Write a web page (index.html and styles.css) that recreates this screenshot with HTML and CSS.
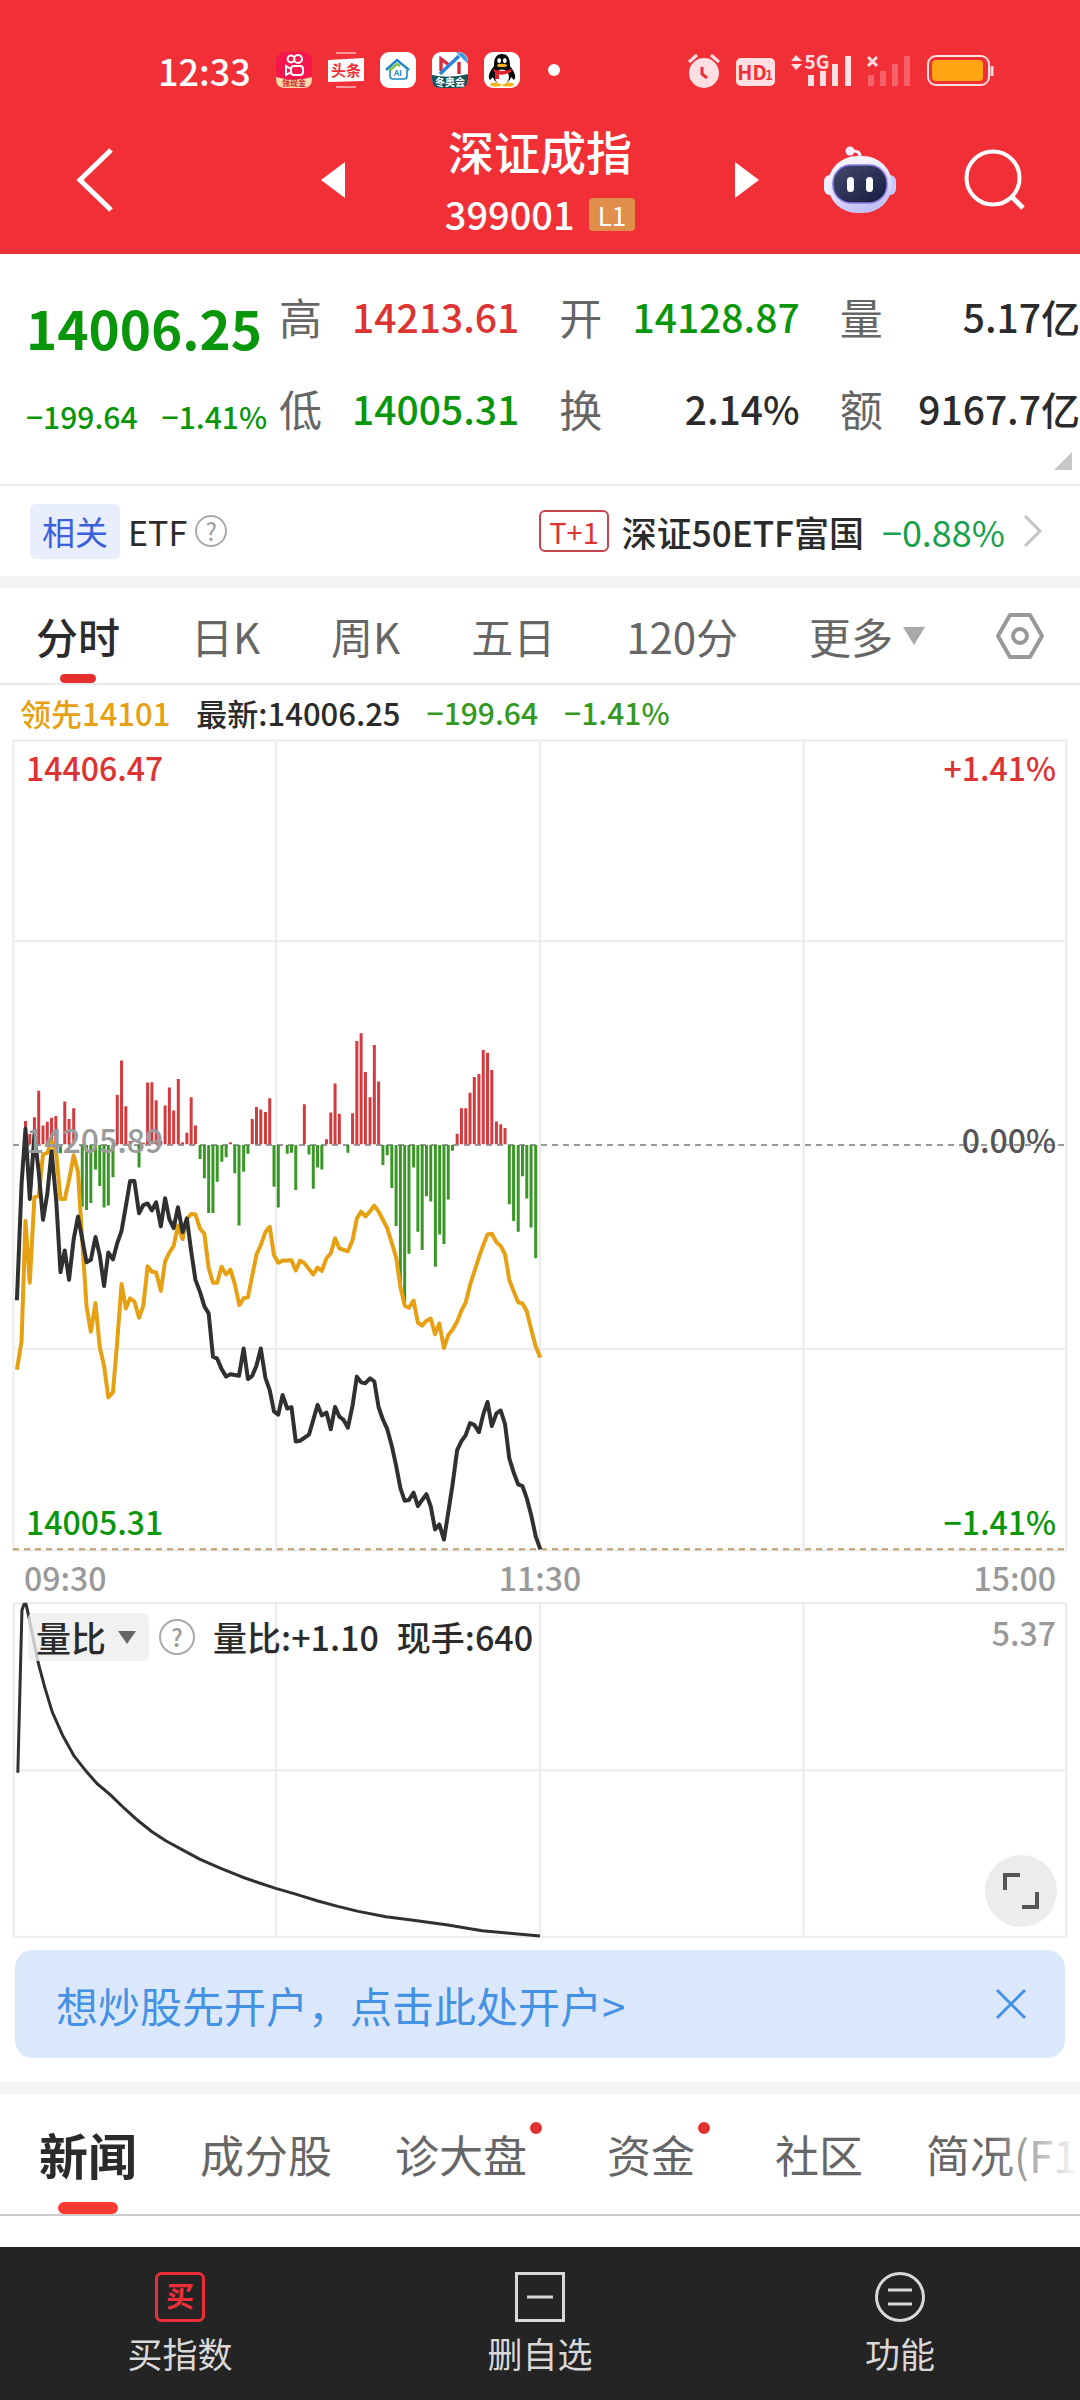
FILE: index.html
```html
<!DOCTYPE html>
<html lang="zh-CN">
<head>
    <meta charset="UTF-8">
    <meta name="viewport" content="width=device-width, initial-scale=1.0">
    <title>深证成指 399001</title>
    <link rel="stylesheet" href="styles.css">
</head>
<body>
    <header class="top">
        <div class="status-bar">
            <span class="clock">12:33</span>
            <div class="app-icons">
                <svg viewBox="0 0 36 36" width="36" height="36">
                    <rect width="36" height="36" rx="9" fill="#f5164b"/>
                    <path d="M0 25Q18 30 36 25V27Q36 36 27 36H9Q0 36 0 27Z" fill="#fbd9a8"/>
                    <g fill="none" stroke="#fff" stroke-width="2">
                        <circle cx="15" cy="7" r="3.4"/><circle cx="22" cy="7" r="4"/>
                        <rect x="15" y="14" width="12" height="9" rx="3"/><path d="M15 17l-5-3v9l5-3"/>
                    </g>
                    <text x="18" y="34" class="app-text" font-size="8" fill="#c81e2c">领现金</text>
                </svg>
                <svg viewBox="0 0 36 36" width="36" height="36">
                    <path d="M8 1h20M8 35h20" stroke="#fff" stroke-width="1"/>
                    <path d="M0 8L36 6V29L0 30Z" fill="#fff"/>
                    <text x="18" y="24" class="app-text" font-size="15" fill="#f12f37">头条</text>
                </svg>
                <svg viewBox="0 0 36 36" width="36" height="36">
                    <rect width="36" height="36" rx="9" fill="#fff"/>
                    <path d="M6 18L17 8L29 18" fill="none" stroke="#1d86c8" stroke-width="2.4"/>
                    <path d="M9 19L17 12L20 14" fill="none" stroke="#7cc242" stroke-width="2.4"/>
                    <path d="M10 19V24Q10 27 13 27H24Q27 27 27 24V18" fill="none" stroke="#1d86c8" stroke-width="1.6"/>
                    <text x="18" y="24" class="app-text" font-size="8" fill="#1d86c8">AI</text>
                </svg>
                <svg viewBox="0 0 36 36" width="36" height="36">
                    <rect width="36" height="36" rx="9" fill="#fff"/>
                    <path d="M24 0Q36 0 36 12Z" fill="#3d9be6"/>
                    <path d="M9 19V7L17 13M27 10V22" fill="none" stroke="#d92b3a" stroke-width="3.4"/>
                    <path d="M8 22L27 4" stroke="#2b86d9" stroke-width="3.6"/>
                    <path d="M0 23Q18 27 36 22V27Q36 36 27 36H9Q0 36 0 27Z" fill="#14545c"/>
                    <text x="18" y="34" class="app-text" font-size="10" fill="#fff">冬奥会</text>
                </svg>
                <svg viewBox="0 0 36 36" width="36" height="36">
                    <rect width="36" height="36" rx="9" fill="#fff"/>
                    <ellipse cx="12" cy="32.5" rx="6" ry="2" fill="#f7b21a"/><ellipse cx="24" cy="32.5" rx="6" ry="2" fill="#f7b21a"/>
                    <path d="M18 2C11 2 10 8 10 14C6 19 3 25 6 28L9 25C11 34 25 34 27 25L30 28C33 25 30 19 26 14C26 8 25 2 18 2Z" fill="#0b0b0b"/>
                    <ellipse cx="18" cy="25" rx="7" ry="7.4" fill="#fff"/>
                    <ellipse cx="15.2" cy="8.6" rx="1.9" ry="2.6" fill="#fff"/><ellipse cx="20.8" cy="8.6" rx="1.9" ry="2.6" fill="#fff"/>
                    <ellipse cx="18" cy="13.4" rx="5" ry="1.7" fill="#f7b21a"/>
                    <path d="M9 17Q18 21 27 17V20Q18 24 15 22V27H11V21Z" fill="#e5202c"/>
                </svg>
            </div>
            <span class="more-dot"></span>
            <div class="signals">
                <svg viewBox="0 0 32 36" width="32" height="36">
                    <circle cx="16" cy="21" r="15" fill="#ffdfe1"/>
                    <path d="M1 10L9 3M31 10L23 3" stroke="#ffdfe1" stroke-width="3"/>
                    <path d="M14 15V22L19 26" fill="none" stroke="#f12f37" stroke-width="3"/>
                </svg>
                <svg viewBox="0 0 39 36" width="39" height="36">
                    <rect y="6" width="39" height="28" rx="5" fill="#ffdfe1"/>
                    <text x="16" y="28" class="app-text" font-size="20" fill="#f12f37">HD</text>
                    <text x="33" y="28" class="app-text" font-size="13" fill="#f12f37">1</text>
                </svg>
                <svg viewBox="0 0 60 36" width="60" height="36">
                    <path d="M0 9L5 3L11 9ZM0 12L5 18L11 12Z" fill="#ffdfe1"/>
                    <text x="26" y="17" class="app-text" font-size="19" fill="#ffdfe1">5G</text>
                    <path d="M20 34V23M32 34V19M44 34V12M57 34V4" stroke="#ffdfe1" stroke-width="6"/>
                </svg>
                <svg viewBox="0 0 44 36" width="44" height="36">
                    <path d="M1 5L10 14M10 5L1 14" stroke="#ffdfe1" stroke-width="3"/>
                    <path d="M4 34V23M16 34V19M28 34V12M40 34V4" stroke="#f7616a" stroke-width="6"/>
                </svg>
                <svg viewBox="0 0 67 36" width="67" height="36">
                    <rect x="1" y="4" width="61" height="29" rx="8" fill="none" stroke="#ffdfe1" stroke-width="2"/>
                    <rect x="5" y="8" width="51" height="21" rx="4" fill="#ffa514"/>
                    <path d="M65 14V24" stroke="#ffdfe1" stroke-width="3"/>
                </svg>
            </div>
        </div>
        <nav class="title-bar">
            <button class="back" aria-label="返回">
                <svg viewBox="0 0 38 66" width="38" height="66"><path d="M35 3L4 33L35 63" fill="none" stroke="#fff" stroke-width="5"/></svg>
            </button>
            <div class="switcher">
                <button aria-label="上一个">
                    <svg viewBox="0 0 24 36" width="24" height="36"><path d="M24 0V36L0 18Z" fill="#fff"/></svg>
                </button>
                <div class="title">
                    <h1>深证成指</h1>
                    <p>399001 <span class="level">L1</span></p>
                </div>
                <button aria-label="下一个">
                    <svg viewBox="0 0 24 36" width="24" height="36"><path d="M0 0V36L24 18Z" fill="#fff"/></svg>
                </button>
            </div>
            <div class="tools">
                <button aria-label="智能助手">
                    <svg viewBox="0 0 72 68" width="72" height="68">
                        <defs>
                            <linearGradient id="shell" x1="0" y1="0" x2="0.4" y2="1">
                                <stop offset="0" stop-color="#ffffff"/><stop offset="0.6" stop-color="#e4e2ff"/><stop offset="1" stop-color="#c3c0f5"/>
                            </linearGradient>
                            <linearGradient id="visor" x1="0" y1="0" x2="1" y2="1">
                                <stop offset="0" stop-color="#43496b"/><stop offset="1" stop-color="#161c40"/>
                            </linearGradient>
                        </defs>
                        <path d="M27 5Q37 4 36 12" fill="none" stroke="#f1efff" stroke-width="3"/>
                        <circle cx="26" cy="5" r="4.5" fill="#f4eeff"/>
                        <rect x="0" y="29" width="14" height="20" rx="6" fill="#eeecff"/>
                        <rect x="58" y="29" width="14" height="20" rx="6" fill="#c9c8fb"/>
                        <rect x="4" y="10" width="64" height="57" rx="29" fill="url(#shell)"/>
                        <rect x="9" y="19" width="54" height="38" rx="18" fill="url(#visor)" stroke="#8b7be8" stroke-width="1.5"/>
                        <rect x="23" y="31" width="7" height="15" rx="3.5" fill="#fff"/>
                        <rect x="42" y="31" width="7" height="15" rx="3.5" fill="#fff"/>
                    </svg>
                </button>
                <button aria-label="搜索">
                    <svg viewBox="0 0 62 62" width="62" height="62">
                        <circle cx="29" cy="29" r="26.5" fill="none" stroke="#fff" stroke-width="4"/>
                        <path d="M47 47L59 59" stroke="#fff" stroke-width="5"/>
                    </svg>
                </button>
            </div>
        </nav>
    </header>

    <main>
        <section class="quote">
            <div class="price">
                <strong>14006.25</strong>
                <p><span>−199.64</span><span>−1.41%</span></p>
            </div>
            <dl class="figures">
                <div><dt>高</dt><dd class="up">14213.61</dd></div>
                <div><dt>开</dt><dd class="down">14128.87</dd></div>
                <div><dt>量</dt><dd>5.17亿</dd></div>
                <div><dt>低</dt><dd class="down">14005.31</dd></div>
                <div><dt>换</dt><dd>2.14%</dd></div>
                <div><dt>额</dt><dd>9167.7亿</dd></div>
            </dl>
            <svg class="corner" viewBox="0 0 18 18" width="18" height="18"><path d="M18 0V18H0Z" fill="#c8c8c8"/></svg>
        </section>

        <section class="etf">
            <span class="chip">相关</span>
            <span>ETF</span>
            <button class="help" aria-label="ETF 说明">?</button>
            <a class="etf-link" href="#etf">
                <span class="t1">T+1</span>
                <span class="etf-name">深证50ETF富国</span>
                <span class="etf-change">−0.88%</span>
                <svg viewBox="0 0 20 34" width="20" height="34"><path d="M2 2L17 17L2 32" fill="none" stroke="#c4c4c4" stroke-width="3"/></svg>
            </a>
        </section>

        <nav class="period-tabs">
            <button class="active">分时</button>
            <button>日K</button>
            <button>周K</button>
            <button>五日</button>
            <button>120分</button>
            <button class="more">更多<svg viewBox="0 0 22 18" width="22" height="18"><path d="M0 0H22L11 18Z" fill="#a8a8a8"/></svg></button>
            <button aria-label="设置">
                <svg viewBox="0 0 48 46" width="48" height="46">
                    <path d="M14 2H34L46 23L34 44H14L2 23Z" fill="none" stroke="#999" stroke-width="4" stroke-linejoin="round"/>
                    <circle cx="24" cy="23" r="7" fill="none" stroke="#999" stroke-width="4"/>
                </svg>
            </button>
        </nav>

        <section class="chart-area">
            <div class="legend">
                <span class="lead">领先14101</span>
                <span>最新:14006.25</span>
                <span class="fall">−199.64</span>
                <span class="fall">−1.41%</span>
            </div>

            <div class="chart minute">
                <svg viewBox="36 -487 2952 1986" preserveAspectRatio="none">
                    <path class="grid" d="M37 -486H2986V1498H37ZM773 -487V1499M1512 -487V1499M2250 -487V1499M36 6H2988M36 1004H2988"/>
                    <path class="zero" d="M36 505H2988"/>
                    <path class="low" d="M36 1495H2988"/>
                    <!-- one bar per minute, measured from the zero line -->
                    <path class="bar-up" d="M71 503V446M83 503V478M96 503V437M108 503V372M120 503V457M132 503V448M144 503V438M156 503V434M181 503V398M193 503V441M206 503V415M328 503V382M340 503V298M352 503V410M364 503V495M401 503V499M413 503V352M425 503V351M437 503V395M450 503V495M462 503V408M474 503V364M486 503V420M499 503V343M511 503V498M523 503V475M535 503V388M547 503V457M645 503V498M706 503V441M718 503V412M730 503V418M743 503V424M755 503V390M852 503V405M914 503V491M926 503V425M938 503V354M950 503V428M987 503V427M999 503V250M1011 503V231M1023 503V326M1036 503V388M1048 503V260M1060 503V349M1280 503V477M1292 503V415M1304 503V415M1316 503V377M1328 503V338M1341 503V331M1353 503V272M1365 503V279M1377 503V321M1390 503V447M1402 503V454M1414 503V463"/>
                    <path class="bar-down" d="M169 505V525M230 505V656M242 505V664M254 505V647M267 505V565M279 505V605M291 505V658M303 505V653M316 505V584M389 505V560M560 505V539M572 505V586M584 505V671M596 505V671M608 505V595M621 505V546M633 505V535M657 505V574M669 505V702M682 505V570M694 505V526M767 505V607M779 505V658M804 505V526M816 505V524M828 505V615M865 505V528M877 505V612M889 505V560M901 505V565M974 505V524M1072 505V554M1084 505V530M1097 505V610M1109 505V703M1121 505V853M1133 505V890M1145 505V771M1158 505V560M1170 505V717M1182 505V762M1194 505V630M1206 505V643M1219 505V803M1231 505V724M1243 505V747M1255 505V638M1267 505V519M1426 505V650M1438 505V691M1451 505V717M1463 505V581M1475 505V636M1487 505V707M1500 505V782"/>
                    <polyline class="lead-line" points="47,1055 60,985 71,690 83,842 96,632 108,630 120,528 132,524 144,495 157,525 169,637 181,637 193,590 206,530 218,570 230,740 242,900 254,962 267,892 279,1000 291,1045 303,1123 316,1110 328,985 340,845 352,905 364,880 376,888 389,928 401,898 413,802 425,815 437,817 450,862 462,790 474,768 486,752 498,702 511,735 523,685 535,674 547,675 560,710 572,722 584,806 596,842 608,842 620,803 633,822 645,810 657,845 670,897 682,880 694,878 706,825 718,773 730,750 743,718 755,705 767,775 779,793 791,788 816,787 828,812 840,788 852,794 877,822 889,805 901,813 914,782 926,770 938,733 950,758 974,765 987,738 999,685 1011,668 1023,680 1036,667 1048,653 1060,668 1084,708 1097,745 1109,780 1121,852 1133,898 1145,903 1158,886 1170,940 1182,947 1194,935 1206,930 1218,968 1230,942 1243,1002 1255,970 1267,957 1280,937 1292,910 1304,890 1316,848 1328,815 1341,780 1353,750 1365,724 1377,722 1390,743 1402,752 1414,772 1426,835 1438,863 1451,890 1463,893 1475,912 1487,955 1500,998 1513,1025"/>
                    <polyline class="price-line" points="47,885 60,600 71,465 83,637 96,480 108,570 120,688 132,625 144,520 157,640 169,816 181,763 193,835 206,735 218,680 230,735 242,792 254,786 267,730 279,775 291,850 303,768 316,785 328,745 340,715 352,655 364,593 376,593 389,672 401,652 413,648 425,665 437,645 450,704 462,635 474,687 486,708 498,657 511,718 523,685 535,765 547,835 560,865 572,900 584,917 596,1023 608,1028 620,1053 633,1072 645,1066 669,1070 682,1003 694,1078 706,1070 718,1045 730,1003 743,1075 755,1105 767,1157 779,1165 791,1117 804,1150 816,1147 828,1231 840,1229 865,1214 877,1178 889,1141 901,1167 914,1160 926,1201 938,1146 950,1170 962,1178 974,1197 987,1143 999,1072 1011,1086 1023,1088 1036,1076 1048,1084 1060,1147 1072,1177 1084,1200 1097,1242 1109,1290 1121,1345 1133,1376 1145,1374 1158,1356 1170,1389 1182,1374 1194,1360 1206,1390 1218,1446 1230,1434 1243,1471 1255,1405 1267,1337 1280,1252 1292,1230 1304,1215 1316,1186 1328,1190 1341,1208 1353,1165 1365,1134 1377,1193 1390,1162 1402,1155 1414,1188 1426,1272 1438,1306 1451,1336 1463,1340 1475,1370 1487,1410 1500,1463 1513,1495"/>
                </svg>
                <div class="scale">
                    <p class="up"><span>14406.47</span><span>+1.41%</span></p>
                    <p class="mid"><span>14205.89</span><span>0.00%</span></p>
                    <p class="down"><span>14005.31</span><span>−1.41%</span></p>
                </div>
            </div>

            <div class="times"><span>09:30</span><span>11:30</span><span>15:00</span></div>

            <div class="chart ratio">
                <svg viewBox="18 308 1532 1003" preserveAspectRatio="none">
                    <path class="grid" d="M19 309H1549V1310H19ZM400 308V1311M784 308V1311M1167 308V1311M18 810H1550"/>
                    <polyline class="ratio-line" points="25,818 31,330 34,312 37,312 40,340 47,410 55,490 64,560 75,635 90,705 107,768 125,815 140,850 160,885 180,925 200,962 220,995 240,1022 265,1050 290,1078 320,1105 350,1130 375,1148 400,1165 430,1183 460,1202 490,1219 520,1234 560,1250 600,1261 650,1275 700,1292 740,1300 784,1308"/>
                </svg>
                <div class="ratio-head">
                    <button class="pick">量比<svg viewBox="0 0 18 13" width="18" height="13"><path d="M0 0H18L9 13Z" fill="#666"/></svg></button>
                    <button class="help" aria-label="量比说明">?</button>
                    <span>量比:+1.10</span>
                    <span>现手:640</span>
                    <span class="max">5.37</span>
                </div>
                <button class="expand" aria-label="全屏">
                    <svg viewBox="0 0 36 36" width="36" height="36"><path d="M2 17V2H17M34 19V34H19" fill="none" stroke="#555" stroke-width="4"/></svg>
                </button>
            </div>
        </section>

        <div class="banner">
            <a href="#open">想炒股先开户，点击此处开户&gt;</a>
            <button aria-label="关闭">
                <svg viewBox="0 0 30 30" width="30" height="30"><path d="M1 1L29 29M29 1L1 29" stroke="#4591e3" stroke-width="3"/></svg>
            </button>
        </div>

        <nav class="info-tabs">
            <button class="active">新闻</button>
            <button>成分股</button>
            <button class="dot">诊大盘</button>
            <button class="dot">资金</button>
            <button>社区</button>
            <button>简况(F10)</button>
        </nav>
    </main>

    <footer class="bottom-bar">
        <button>
            <svg viewBox="0 0 50 50" width="50" height="50">
                <rect x="1.5" y="1.5" width="47" height="47" rx="5" fill="none" stroke="#ee2f3b" stroke-width="3"/>
                <text x="25" y="35" class="app-text" font-size="28" fill="#ee2f3b">买</text>
            </svg>
            买指数
        </button>
        <button>
            <svg viewBox="0 0 50 50" width="50" height="50">
                <rect x="1.5" y="1.5" width="47" height="47" fill="none" stroke="#d8d8d8" stroke-width="3"/>
                <path d="M12 25H38" stroke="#d8d8d8" stroke-width="3"/>
            </svg>
            删自选
        </button>
        <button>
            <svg viewBox="0 0 50 50" width="50" height="50">
                <circle cx="25" cy="25" r="23.5" fill="none" stroke="#d8d8d8" stroke-width="3"/>
                <path d="M13 18H37M13 32H37" stroke="#d8d8d8" stroke-width="3"/>
            </svg>
            功能
        </button>
    </footer>
</body>
</html>
```
FILE: styles.css
```css
* {
    box-sizing: border-box;
}

body {
    margin: 0;
    min-height: 100vh;
    display: flex;
    flex-direction: column;
    background-color: #fff;
    color: #2b2b2b;
    font-family: "Noto Sans CJK SC", sans-serif;
    overflow-x: hidden;
}

main {
    flex: 1;
}

h1, p, dl, dt, dd {
    margin: 0;
}

svg {
    display: block;
    flex: none;
    overflow: visible;
}

button {
    border: none;
    background: none;
    padding: 0;
    margin: 0;
    color: inherit;
    font: inherit;
    cursor: pointer;
}

a {
    color: inherit;
    text-decoration: none;
}

.up {
    color: #dc3333;
}

.down {
    color: #0a960a;
}

.app-text {
    font-weight: 700;
    text-anchor: middle;
}

/* red header */
.top {
    background-color: #f12f37;
    color: #fff;
    height: 254px;
}

.status-bar {
    display: flex;
    align-items: center;
    padding: 52px 86px 0 158px;
}

.clock {
    font-size: 36px;
    line-height: 36px;
    font-weight: 500;
    margin-right: 25px;
}

.app-icons {
    display: flex;
    gap: 16px;
}

.more-dot {
    width: 12px;
    height: 12px;
    border-radius: 50%;
    background-color: #fff;
    margin-left: 28px;
}

.signals {
    display: flex;
    gap: 16px;
    margin-left: auto;
}

.title-bar {
    display: grid;
    grid-template-columns: 1fr 438px 1fr;
    align-items: center;
    padding: 28px 54px 0;
}

.back {
    justify-self: start;
    margin-left: 22px;
}

.switcher {
    display: flex;
    align-items: center;
    justify-content: space-between;
}

.title {
    text-align: center;
}

.title h1 {
    font-size: 46px;
    line-height: 68px;
    font-weight: 500;
}

.title p {
    display: flex;
    align-items: center;
    justify-content: center;
    gap: 14px;
    font-size: 38px;
    line-height: 60px;
    font-weight: 500;
}

.level {
    background-color: #e08f4a;
    border-radius: 4px;
    font-size: 26px;
    line-height: 33px;
    font-weight: 400;
    padding: 0 9px;
}

.tools {
    display: flex;
    align-items: center;
    justify-content: flex-end;
    gap: 68px;
}

/* price and figures */
.quote {
    position: relative;
    display: flex;
    height: 232px;
    padding-top: 16px;
    border-bottom: 2px solid #ececec;
}

.price {
    width: 279px;
    padding-left: 26px;
    color: #0a960a;
}

.price strong {
    display: block;
    font-size: 53px;
    line-height: 114px;
    font-weight: 700;
}

.price p {
    display: flex;
    gap: 24px;
    font-size: 30px;
    line-height: 64px;
    font-weight: 500;
    white-space: nowrap;
}

.figures {
    flex: 1;
    display: grid;
    grid-template-columns: 1fr 1fr 1fr;
    column-gap: 40px;
    grid-auto-rows: 92px;
}

.figures div {
    display: flex;
    justify-content: space-between;
    align-items: center;
    font-size: 39px;
    white-space: nowrap;
}

.figures dt {
    color: #666;
    font-size: 43px;
}

.figures dd {
    font-weight: 500;
}

.corner {
    position: absolute;
    right: 8px;
    bottom: 14px;
}

/* related ETF */
.etf {
    display: flex;
    align-items: center;
    height: 90px;
    padding: 0 37px 0 30px;
    gap: 8px;
    font-size: 34px;
}

.chip {
    background-color: #e8eefc;
    color: #3a60dd;
    border-radius: 6px;
    font-size: 33px;
    line-height: 55px;
    padding: 0 12px;
}

.help {
    width: 32px;
    height: 32px;
    border: 2px solid #aaa;
    border-radius: 50%;
    color: #999;
    font-size: 24px;
    line-height: 28px;
}

.etf-link {
    display: flex;
    align-items: center;
    margin-left: auto;
}

.t1 {
    border: 2px solid #c64450;
    border-radius: 6px;
    color: #dc3333;
    font-size: 29px;
    line-height: 38px;
    padding: 0 8px;
}

.etf-name {
    margin: 0 18px 0 13px;
    font-size: 35px;
    font-weight: 500;
}

.etf-change {
    color: #18a04e;
    font-size: 36px;
    margin-right: 18px;
}

/* chart period tabs */
.period-tabs {
    display: flex;
    justify-content: space-between;
    align-items: center;
    height: 109px;
    padding: 0 36px;
    border-top: 12px solid #f4f4f4;
    border-bottom: 2px solid #e8e8e8;
    font-size: 42px;
    color: #666;
}

.period-tabs button {
    position: relative;
    line-height: 95px;
}

.period-tabs .active,
.info-tabs .active {
    color: #2b2b2b;
    font-weight: 500;
}

.period-tabs .active::after,
.info-tabs .active::after {
    content: "";
    position: absolute;
    left: 50%;
    bottom: 0;
    width: 36px;
    height: 9px;
    margin-left: -18px;
    border-radius: 5px;
    background-color: #e63030;
}

.period-tabs .more {
    display: flex;
    align-items: center;
    gap: 10px;
}

/* charts */
.chart-area {
    padding: 0 13px;
}

.legend {
    display: flex;
    gap: 26px;
    padding-left: 7px;
    font-size: 31px;
    line-height: 55px;
    font-weight: 500;
}

.lead {
    color: #e6a012;
}

.fall {
    color: #35991f;
    font-size: 30px;
}

.chart {
    position: relative;
}

.chart > svg {
    width: 100%;
    height: 811px;
}

.ratio > svg {
    height: 334px;
}

.chart > svg * {
    fill: none;
    vector-effect: non-scaling-stroke;
    stroke-linejoin: round;
}

.grid {
    stroke: #ebebeb;
    stroke-width: 2px;
}

.zero {
    stroke: #999;
    stroke-width: 2px;
    stroke-dasharray: 6 5;
}

.low {
    stroke: #bf9c6c;
    stroke-width: 2px;
    stroke-dasharray: 6 5;
}

.bar-up {
    stroke: #d23c3f;
    stroke-width: 3px;
}

.bar-down {
    stroke: #3a9727;
    stroke-width: 3px;
}

.lead-line {
    stroke: #e6a012;
    stroke-width: 4px;
}

.price-line {
    stroke: #303030;
    stroke-width: 4px;
}

.ratio-line {
    stroke: #303030;
    stroke-width: 3px;
}

.scale {
    position: absolute;
    inset: 0;
    display: flex;
    flex-direction: column;
    justify-content: space-between;
    padding: 0 11px 3px 13px;
    font-size: 32px;
    line-height: 54px;
    font-weight: 500;
}

.scale p {
    display: flex;
    justify-content: space-between;
}

.scale .mid {
    color: #555;
    padding-bottom: 10px;
}

.mid span:first-child {
    color: #9b9b9b;
}

.times {
    display: flex;
    justify-content: space-between;
    padding: 0 11px;
    font-size: 32px;
    line-height: 52px;
    font-weight: 500;
    color: #999;
}

.ratio-head {
    position: absolute;
    left: 15px;
    right: 11px;
    top: 10px;
    display: flex;
    align-items: center;
    font-size: 34px;
    line-height: 48px;
    font-weight: 500;
}

.ratio-head span {
    margin-left: 18px;
}

.pick {
    display: flex;
    align-items: center;
    gap: 12px;
    background-color: rgba(238, 238, 238, 0.8);
    border-radius: 5px;
    font-size: 35px;
    padding: 0 13px 0 8px;
    margin-right: 10px;
}

.ratio-head .help {
    width: 36px;
    height: 36px;
    line-height: 32px;
}

.ratio-head .max {
    align-self: flex-start;
    margin-left: auto;
    color: #999;
    font-size: 32px;
    line-height: 38px;
}

.expand {
    position: absolute;
    right: 10px;
    bottom: 10px;
    width: 72px;
    height: 72px;
    border-radius: 50%;
    background-color: #ececec;
    display: grid;
    place-items: center;
}

/* open account banner */
.banner {
    display: flex;
    align-items: center;
    justify-content: space-between;
    height: 108px;
    margin: 13px 15px 24px;
    padding: 0 39px 0 41px;
    border-radius: 18px;
    background-color: #dbe8fb;
    color: #4591e3;
    font-size: 42px;
}

/* info tabs */
.info-tabs {
    display: flex;
    align-items: center;
    gap: 63px;
    height: 134px;
    padding-left: 39px;
    border-top: 12px solid #f4f4f4;
    border-bottom: 2px solid #ccc;
    font-size: 44px;
    color: #666;
    overflow: hidden;
    white-space: nowrap;
    position: relative;
}

.info-tabs::after {
    content: "";
    position: absolute;
    top: 0;
    right: 0;
    width: 90px;
    height: 118px;
    background: linear-gradient(to right, rgba(255, 255, 255, 0), #fff);
}

.info-tabs button {
    position: relative;
    line-height: 120px;
}

.info-tabs .active {
    font-size: 49px;
    font-weight: 700;
}

.info-tabs .active::after {
    width: 60px;
    height: 12px;
    margin-left: -30px;
    border-radius: 6px;
    background-color: #fb3a32;
}

.info-tabs .dot {
    padding-right: 17px;
}

.info-tabs .dot::after {
    content: "";
    position: absolute;
    top: 28px;
    right: 2px;
    width: 12px;
    height: 12px;
    border-radius: 50%;
    background-color: #e23030;
}

/* bottom bar */
.bottom-bar {
    display: grid;
    grid-template-columns: 1fr 1fr 1fr;
    height: 153px;
    background-color: #242424;
    color: #d8d8d8;
    font-size: 35px;
}

.bottom-bar button {
    display: flex;
    flex-direction: column;
    align-items: center;
    gap: 6px;
    padding-top: 25px;
    line-height: 50px;
}
```
